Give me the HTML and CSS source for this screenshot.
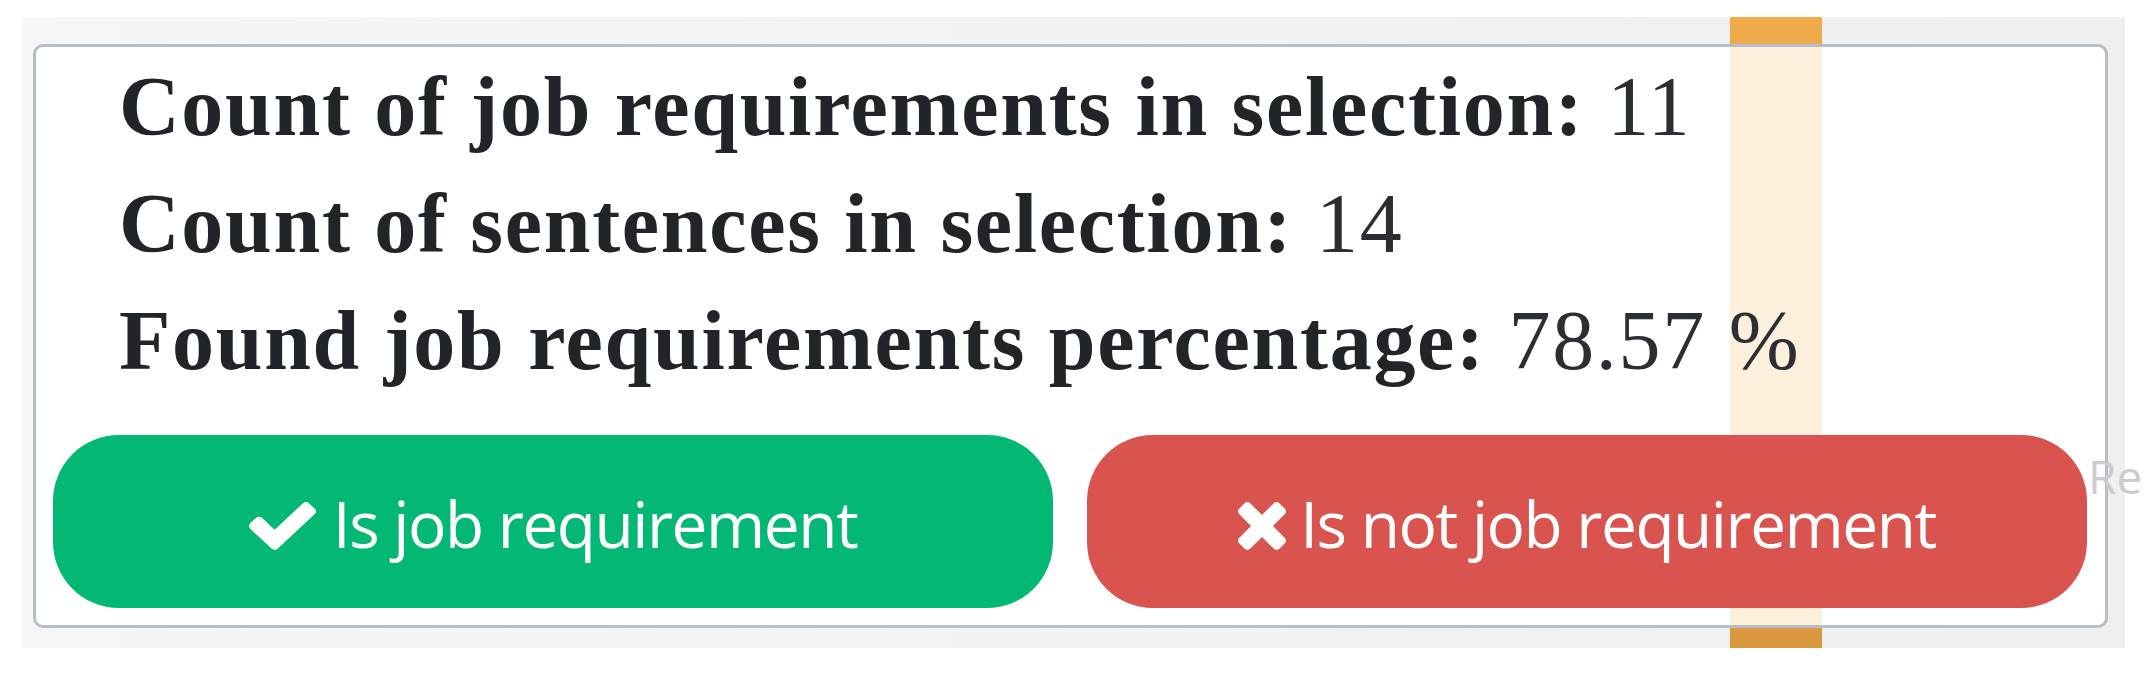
FILE: index.html
```html
<!DOCTYPE html>
<html lang="en">
<head>
<meta charset="utf-8">
<title>Job requirement selection</title>
<link rel="stylesheet" href="styles.css">
</head>
<body>
<div class="panel">
  <div class="strip"></div>
  <div class="card">
    <div class="card-strip"></div>
    <span class="ghost">Re</span>
    <div class="stats">
      <p class="stat"><b>Count of job requirements in selection:</b> <span class="num">11</span></p>
      <p class="stat"><b>Count of sentences in selection:</b> <span class="num">14</span></p>
      <p class="stat"><b>Found job requirements percentage:</b> <span class="num">78.57 %</span></p>
    </div>
    <div class="actions">
      <button class="btn btn-yes" type="button">
        <svg class="ico ico-check" viewBox="121 334 1550 1188" preserveAspectRatio="none" aria-hidden="true"><path d="M1671 566q0 40-28 68l-724 724-136 136q-28 28-68 28t-68-28l-136-136-362-362q-28-28-28-68t28-68l136-136q28-28 68-28t68 28l294 295 656-657q28-28 68-28t68 28l136 136q28 28 28 68z"/></svg>
        <span class="label">Is job requirement</span>
      </button>
      <button class="btn btn-no" type="button">
        <svg class="ico ico-times" viewBox="302 366 1188 1188" aria-hidden="true"><path d="M1490 1322q0 40-28 68l-136 136q-28 28-68 28t-68-28l-294-294-294 294q-28 28-68 28t-68-28l-136-136q-28-28-28-68t28-68l294-294-294-294q-28-28-28-68t28-68l136-136q28-28 68-28t68 28l294 294 294-294q28-28 68-28t68 28l136 136q28 28 28 68t-28 68l-294 294 294 294q28 28 28 68z"/></svg>
        <span class="label">Is not job requirement</span>
      </button>
    </div>
  </div>
</div>
</body>
</html>
```

FILE: styles.css
```css
html, body {
  margin: 0;
  background: #ffffff;
}

.panel {
  position: relative;
  margin: 17px 0 0 22px;
  width: 2103px;
  height: 631px;
  box-sizing: border-box;
  padding: 27px 17px 20px 11px;
  background: linear-gradient(90deg, #f6f6f6, #efefef);
}

.strip {
  position: absolute;
  left: 1708px;
  top: 0;
  width: 92px;
  height: 100%;
  background: linear-gradient(#efab4a, #dc983e);
}

.card {
  position: relative;
  box-sizing: border-box;
  height: 584px;
  border: 3px solid #b7bec7;
  border-radius: 10px;
  background: #ffffff;
  padding: 1px 18px 17px 17px;
  display: flex;
  flex-direction: column;
}

.card-strip {
  position: absolute;
  left: 1694px;
  top: 0;
  bottom: 0;
  width: 92px;
  background: #fcefdc;
}

.ghost {
  position: absolute;
  left: 2052px;
  top: 406px;
  font-family: "Open Sans", sans-serif;
  font-size: 46px;
  line-height: 1;
  color: #c9cdd2;
}

.stats {
  position: relative;
  padding-left: 66px;
  font-family: "Liberation Serif", "Times New Roman", serif;
  font-size: 84px;
  line-height: 117px;
  letter-spacing: 1.7px;
  color: #212529;
}

.stat {
  margin: 0;
  white-space: nowrap;
}

.stat b {
  font-weight: 700;
}

.num {
  font-weight: 400;
  color: #2b2f33;
}

.actions {
  position: relative;
  margin-top: auto;
  display: flex;
  gap: 34px;
}

.btn {
  flex: 1;
  height: 173px;
  border: 0;
  border-radius: 66px;
  padding: 4px 0 0;
  display: flex;
  align-items: center;
  justify-content: center;
  color: #ffffff;
  font-family: "Open Sans", sans-serif;
  font-size: 64px;
  line-height: 1;
  letter-spacing: -1.5px;
  cursor: pointer;
}

.btn-yes {
  background: #03b774;
}

.btn-no {
  background: #d9534f;
}

.ico {
  fill: #ffffff;
  flex: none;
  margin-top: 4px;
}

.ico-check {
  width: 67px;
  height: 48px;
  margin-right: 17px;
}

.ico-times {
  width: 48px;
  height: 48px;
  margin-right: 14px;
}

.label {
  white-space: nowrap;
}
```
